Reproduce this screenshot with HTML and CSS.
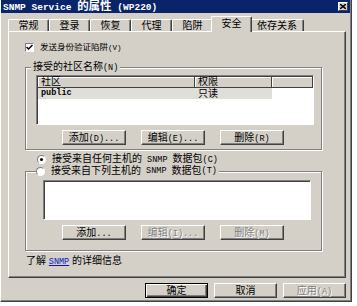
FILE: index.html
```html
<!DOCTYPE html>
<html lang="zh-CN">
<head>
    <meta charset="UTF-8">
    <meta name="viewport" content="width=device-width, initial-scale=1.0">
    <title>SNMP Service 的属性 (WP220)</title>
    <link rel="stylesheet" href="styles.css">
</head>
<body>
    <div class="window">
        <div class="titlebar">
            <span class="title"><span class="tm">SNMP Service </span>的属性<span class="tm"> (WP220)</span></span>
            <span class="close">
                <svg width="6" height="5" viewBox="0 0 6 5"><path d="M0 0 L6 5 M6 0 L0 5" stroke="#000" stroke-width="1.4"/></svg>
            </span>
        </div>

        <div class="tabs">
            <span class="tab">常规</span>
            <span class="tab">登录</span>
            <span class="tab">恢复</span>
            <span class="tab">代理</span>
            <span class="tab">陷阱</span>
            <span class="tab active">安全</span>
            <span class="tab wide">依存关系</span>
        </div>

        <div class="panel">
            <div class="check-row">
                <span class="checkbox">
                    <svg width="7" height="7" viewBox="0 0 7 7"><path d="M0.5 3 L2.5 5 L6.5 1" fill="none" stroke="#000" stroke-width="1.5"/></svg>
                </span>
                <span>发送身份验证陷阱<span class="m">(V)</span></span>
            </div>

            <fieldset class="group group-top">
                <legend>接受的社区名称<span class="m">(N)</span></legend>
                <div class="listview">
                    <div class="lv-head">
                        <span class="col-name">社区</span>
                        <span class="col-right">权限</span>
                        <span class="col-rest"></span>
                    </div>
                    <div class="lv-row selected">
                        <span class="col-name m">public</span>
                        <span class="col-right">只读</span>
                    </div>
                </div>
                <div class="btn-row">
                    <button class="btn">添加<span class="m">(D)...</span></button>
                    <button class="btn">编辑<span class="m">(E)...</span></button>
                    <button class="btn">删除<span class="m">(R)</span></button>
                </div>
            </fieldset>

            <div class="radio-row">
                <span class="radio on"></span>
                <span>接受来自任何主机的<span class="m"> SNMP </span>数据包<span class="m">(C)</span></span>
            </div>

            <fieldset class="group group-hosts">
                <legend><span class="radio"></span>接受来自下列主机的<span class="m"> SNMP </span>数据包<span class="m">(T)</span></legend>
                <div class="listbox"></div>
                <div class="btn-row">
                    <button class="btn">添加<span class="m">...</span></button>
                    <button class="btn" disabled>编辑<span class="m">(I)...</span></button>
                    <button class="btn" disabled>删除<span class="m">(M)</span></button>
                </div>
            </fieldset>

            <div class="info">了解 <a href="#">SNMP</a> 的详细信息</div>
        </div>

        <div class="footer">
            <button class="btn default">确定</button>
            <button class="btn">取消</button>
            <button class="btn" disabled>应用<span class="m">(A)</span></button>
        </div>
    </div>
</body>
</html>
```

FILE: styles.css
```css
body {
    margin: 0;
    background: #fff;
    font-family: "Liberation Sans", "Noto Sans CJK SC", sans-serif;
    font-size: 10px;
    color: #000;
}
.m {
    font-family: "Liberation Mono", monospace;
    font-size: 8.5px;
    white-space: pre;
}
.window {
    width: 352px;
    height: 302px;
    box-sizing: border-box;
    background: #d4d0c8;
    border-left: 1px solid #fff;
    border-right: 1px solid #404040;
    border-bottom: 1px solid #404040;
    box-shadow: inset -1px -1px #808080;
    display: flex;
    flex-direction: column;
}
.titlebar {
    height: 13px;
    margin-right: 1px;
    background: #0a246a;
    color: #fff;
    display: flex;
    align-items: center;
    justify-content: space-between;
    padding: 0 2px;
}
.title {
    font-weight: bold;
    font-size: 11.5px;
    line-height: 13px;
    white-space: nowrap;
}
.tm {
    font-family: "Liberation Mono", monospace;
    font-size: 9.5px;
    white-space: pre;
}
.close {
    width: 8px;
    height: 7px;
    background: #d4d0c8;
    border: 1px solid;
    border-color: #fff #404040 #404040 #fff;
    display: flex;
    align-items: center;
    justify-content: center;
}
.close svg {
    display: block;
}

/* tab strip */
.tabs {
    height: 18px;
    display: flex;
    align-items: flex-end;
    padding-left: 7px;
}
.tab {
    height: 11px;
    line-height: 11px;
    padding: 0 9.5px;
    border-top: 1px solid #fff;
    border-left: 1px solid #fff;
    border-right: 1px solid #404040;
    box-shadow: inset -1px 0 #808080;
    border-radius: 2px 2px 0 0;
    white-space: nowrap;
}
.tab.wide {
    padding: 0 6px;
}
.tab.active {
    height: 14px;
    line-height: 13px;
    margin: 0 -2px -1px;
    padding-bottom: 1px;
    position: relative;
    z-index: 1;
    background: #d4d0c8;
}

/* property page */
.panel {
    width: 338px;
    height: 247px;
    box-sizing: border-box;
    margin-left: 7px;
    padding: 9px 0 0 16px;
    border-top: 1px solid #fff;
    border-left: 1px solid #fff;
    border-right: 1px solid #404040;
    border-bottom: 1px solid #404040;
    box-shadow: inset -1px -1px #808080;
    display: flex;
    flex-direction: column;
}
.check-row {
    height: 12px;
    line-height: 12px;
    font-size: 8.5px;
    display: flex;
    align-items: center;
    white-space: nowrap;
}
.check-row .m {
    font-size: 7.5px;
}
.checkbox {
    width: 7px;
    height: 7px;
    margin-right: 6px;
    background: #fff;
    border: 1px solid;
    border-color: #808080 #fff #fff #808080;
    display: flex;
    align-items: center;
    justify-content: center;
}
.checkbox svg {
    display: block;
}
.group {
    width: 297px;
    box-sizing: border-box;
    margin: 0;
    border: 1px solid #808080;
    box-shadow: 1px 1px 0 #fff, inset 1px 1px 0 #fff;
    min-width: 0;
}
.group legend {
    line-height: 12px;
    padding: 0 2px;
    background: #d4d0c8;
    white-space: nowrap;
}
.group-top {
    margin-top: 8px;
    padding: 1px 7px 4px 10px;
}
.group-top legend {
    margin-left: -5px;
}
.group-hosts {
    padding: 3px 10px 10px 17px;
}
.group-hosts legend {
    margin-left: -7px;
    padding-left: 0;
    display: flex;
    align-items: center;
}
.listview,
.listbox {
    background: #fff;
    border: 1px solid;
    border-color: #808080 #fff #fff #808080;
    box-shadow: inset 1px 1px #404040;
    box-sizing: border-box;
}
.listview {
    height: 50px;
    padding: 1px 0 0 1px;
}
.listbox {
    height: 40px;
}
.lv-head,
.lv-row {
    display: flex;
}
.lv-head span {
    height: 10px;
    line-height: 10px;
    background: #d4d0c8;
    border-right: 1px solid #404040;
    border-bottom: 1px solid #404040;
    box-shadow: inset 1px 1px #fff;
    padding-left: 3px;
}
.col-name {
    width: 153px;
}
.col-right {
    width: 73px;
}
.col-rest {
    flex: 1;
}
.lv-row {
    height: 11px;
    line-height: 11px;
}
.lv-row span {
    padding-left: 3px;
    padding-right: 1px;
}
.lv-row.selected span {
    background: #e0ded8;
}
.lv-row .m {
    font-weight: bold;
}
.btn-row {
    display: flex;
    gap: 15px;
}
.group-top .btn-row {
    margin-top: 5px;
    padding-left: 26px;
}
.group-hosts .btn-row {
    margin-top: 5px;
    padding-left: 19px;
}
.btn {
    width: 64px;
    height: 15px;
    padding: 0;
    font-family: inherit;
    font-size: 10px;
    line-height: 13px;
    color: #000;
    background: #d4d0c8;
    border: 1px solid;
    border-color: #fff #404040 #404040 #fff;
    box-shadow: inset -1px -1px #808080;
    white-space: nowrap;
}
.btn:disabled {
    color: #808080;
    text-shadow: 1px 1px #fff;
}
.btn.default {
    border: 1px solid #000;
    box-shadow: inset 1px 1px #fff, inset -1px -1px #404040, inset -2px -2px #808080;
}
.radio-row {
    margin-top: 4px;
    height: 11px;
    line-height: 11px;
    padding-left: 12px;
    display: flex;
    align-items: center;
    white-space: nowrap;
}
.radio {
    width: 7px;
    height: 7px;
    margin-right: 6px;
    border-radius: 50%;
    background: #fff;
    border: 1px solid;
    border-color: #808080 #fff #fff #808080;
    display: inline-flex;
    align-items: center;
    justify-content: center;
}
.radio.on::after {
    content: "";
    width: 3px;
    height: 3px;
    border-radius: 50%;
    background: #000;
}
.info {
    margin-top: 4px;
    padding-left: 1px;
    line-height: 12px;
}
.info a {
    font-family: "Liberation Mono", monospace;
    font-size: 8.5px;
    color: #1010c0;
}
.footer {
    display: flex;
    justify-content: flex-end;
    gap: 6px;
    margin-top: 5px;
    padding-right: 5px;
}
.footer .btn {
    width: 63px;
}
```
